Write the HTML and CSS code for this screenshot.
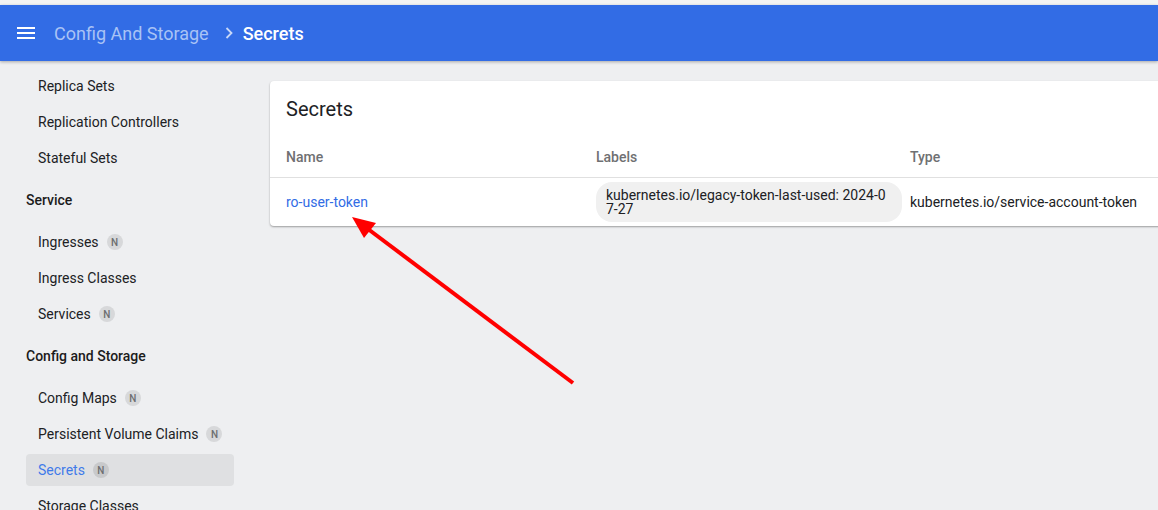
FILE: index.html
```html
<!DOCTYPE html>
<html lang="en">
<head>
<meta charset="utf-8">
<title>Secrets</title>
<link rel="stylesheet" href="styles.css">
</head>
<body>
<div class="app">
  <div class="topstrip"></div>
  <header class="toolbar">
    <svg class="menu" width="18" height="12" viewBox="0 0 18 12"><rect x="0" y="0" width="18" height="2" fill="#fff"/><rect x="0" y="5" width="18" height="2" fill="#fff"/><rect x="0" y="10" width="18" height="2" fill="#fff"/></svg>
    <span class="crumb">Config And Storage</span>
    <svg class="chev" width="8" height="12" viewBox="0 0 8 12"><path d="M1.5 1 L6.5 6 L1.5 11" fill="none" stroke="#c9d8f7" stroke-width="1.8"/></svg>
    <span class="crumb-current">Secrets</span>
  </header>
  <div class="body">
    <nav class="sidebar">
      <div class="item">Replica Sets</div>
      <div class="item">Replication Controllers</div>
      <div class="item">Stateful Sets</div>
      <div class="section">Service</div>
      <div class="item">Ingresses <span class="badge">N</span></div>
      <div class="item">Ingress Classes</div>
      <div class="item">Services <span class="badge">N</span></div>
      <div class="section">Config and Storage</div>
      <div class="item">Config Maps <span class="badge">N</span></div>
      <div class="item">Persistent Volume Claims <span class="badge">N</span></div>
      <div class="item active">Secrets <span class="badge">N</span></div>
      <div class="item">Storage Classes</div>
    </nav>
    <main class="main">
      <section class="card">
        <h2 class="card-title">Secrets</h2>
        <div class="row head">
          <div class="cell">Name</div>
          <div class="cell">Labels</div>
          <div class="cell">Type</div>
        </div>
        <div class="row data">
          <div class="cell"><a class="link" href="#">ro-user-token</a></div>
          <div class="cell"><span class="chip">kubernetes.io/legacy-token-last-used: 2024-07-27</span></div>
          <div class="cell">kubernetes.io/service-account-token</div>
        </div>
      </section>
    </main>
  </div>
  <svg class="arrow" width="1158" height="510" viewBox="0 0 1158 510">
    <line x1="573" y1="383" x2="368" y2="229" stroke="#ff0000" stroke-width="4"/>
    <polygon points="352,217 376,223 364,238" fill="#ff0000"/>
  </svg>
</div>
</body>
</html>
```
FILE: styles.css
```css
* { box-sizing: border-box; }
html, body { margin: 0; padding: 0; }
body {
  font-family: Roboto, "Noto Sans", "Liberation Sans", sans-serif;
  background: #eeeff1;
  color: #202124;
  width: 1158px;
  height: 510px;
  overflow: hidden;
}
.app { position: relative; height: 510px; display: flex; flex-direction: column; }
.topstrip { height: 5px; background: #f3f3f3; flex: none; }
.toolbar {
  height: 56px;
  flex: none;
  background: #326ce5;
  display: flex;
  align-items: center;
  padding-left: 17px;
  box-shadow: 0 1px 3px rgba(0,0,0,0.3);
  position: relative;
  z-index: 1;
}
.menu { display: block; margin-right: 19px; }
.crumb { font-size: 18px; color: #a9c3f5; }
.chev { margin: 0 10px 0 16px; display: block; }
.crumb-current { font-size: 18px; color: #fff; font-weight: 500; }
.body { display: flex; flex: 1; min-height: 0; }
.sidebar {
  width: 256px;
  flex: none;
  padding: 7px 22px 0 26px;
  overflow: hidden;
  display: flex;
  flex-direction: column;
}
.item {
  flex: none;
  height: 32px;
  margin: 2px 0;
  padding-left: 12px;
  display: flex;
  align-items: center;
  font-size: 14px;
  color: #202124;
  border-radius: 4px;
  white-space: nowrap;
}
.item.active { background: #dfe0e2; color: #3f7be9; }
.section {
  flex: none;
  height: 48px;
  display: flex;
  align-items: center;
  font-size: 14px;
  font-weight: 500;
  color: #1b1b1b;
}
.badge {
  display: inline-flex;
  align-items: center;
  justify-content: center;
  width: 16px;
  height: 16px;
  border-radius: 50%;
  background: #d7d8da;
  color: #6d6e70;
  font-size: 10px;
  font-weight: 500;
  margin-left: 8px;
}
.item.active .badge { background: #c8c9cb; }
.main { flex: 1; min-width: 0; padding: 20px 0 0 14px; overflow: hidden; }
.card {
  width: 960px;
  background: #fff;
  border-radius: 4px 0 0 4px;
  box-shadow: 0 1px 2px rgba(0,0,0,0.35);
}
.card-title {
  margin: 0;
  padding: 16px 16px 16px;
  font-size: 20px;
  line-height: 24px;
  font-weight: 400;
  color: #202124;
}
.row {
  display: grid;
  grid-template-columns: 310px 314px 1fr;
  padding-left: 16px;
  align-items: center;
}
.row.head {
  height: 41px;
  border-bottom: 1px solid #e0e0e0;
  font-size: 14px;
  font-weight: 500;
  color: #6f7072;
  padding-bottom: 1px;
}
.row.data { height: 48px; font-size: 14px; color: #202124; }
.link { color: #326ce5; text-decoration: none; }
.chip {
  display: block;
  width: 306px;
  background: #f0f0f0;
  border-radius: 16px;
  padding: 6px 10px;
  font-size: 14px;
  line-height: 14px;
  overflow-wrap: anywhere;
  word-break: break-all;
  color: #202124;
}
.arrow { position: absolute; left: 0; top: 0; pointer-events: none; z-index: 2; }
```
